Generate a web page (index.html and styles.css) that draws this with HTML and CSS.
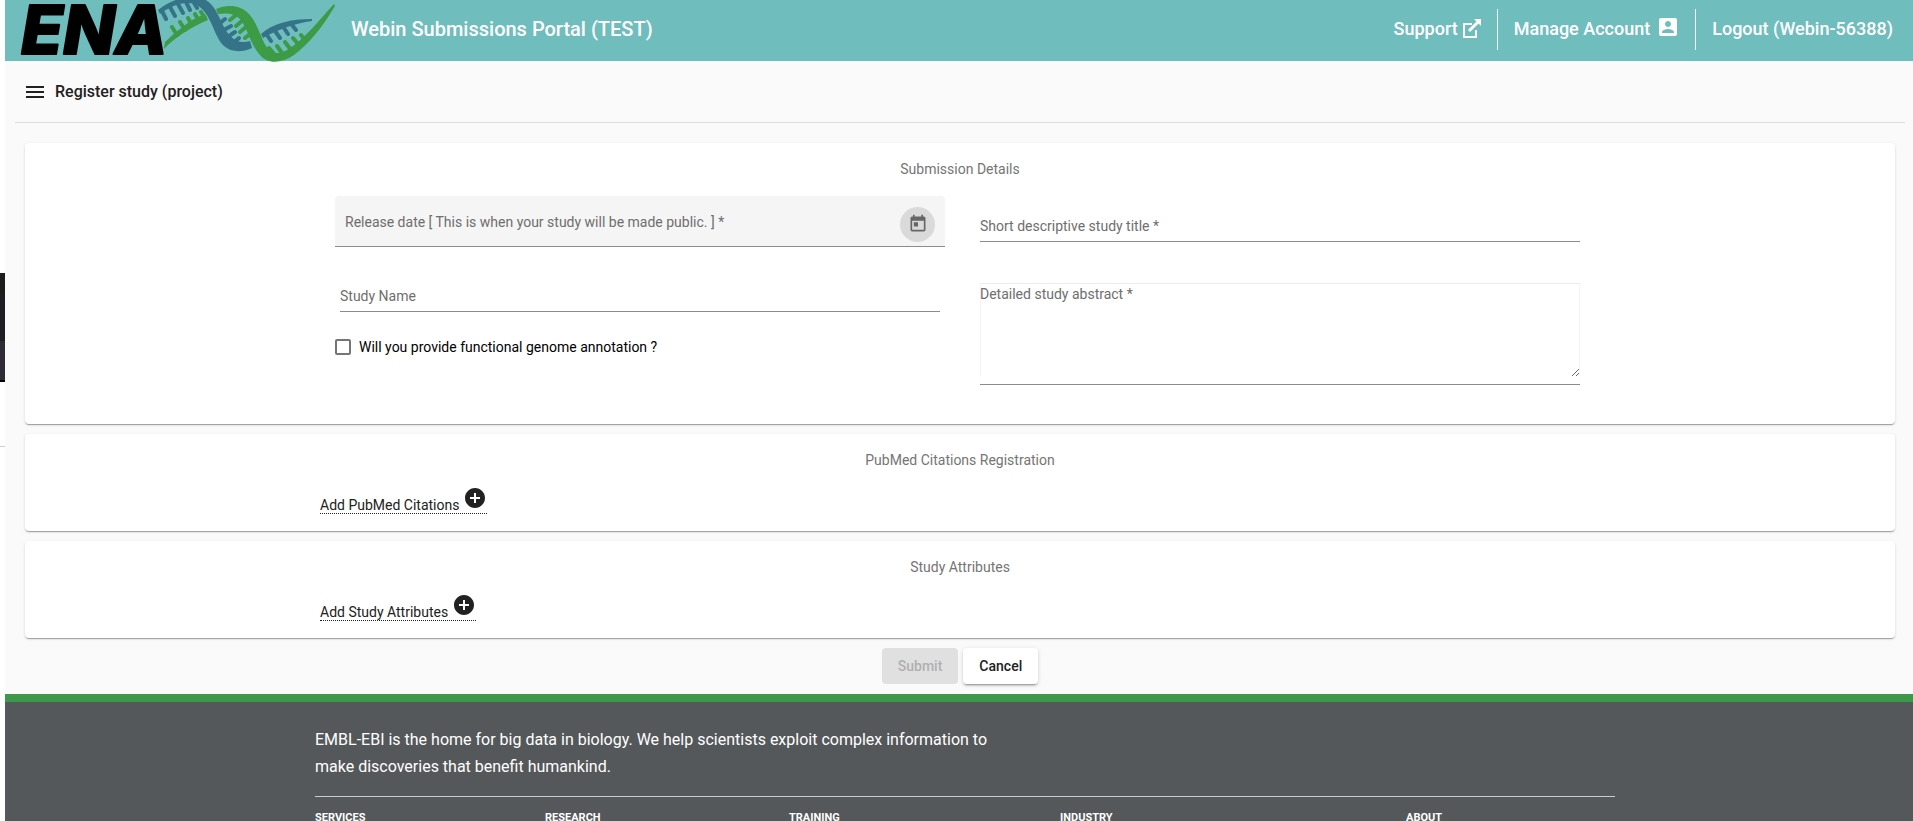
FILE: index.html
```html
<!DOCTYPE html>
<html lang="en">
<head>
<meta charset="utf-8">
<title>Webin Submissions Portal (TEST)</title>
<link rel="stylesheet" href="styles.css">
</head>
<body>
<div class="window-edge"><div class="edge-dark"></div><div class="edge-line"></div></div>
<div class="app">
  <header class="topbar">
    <a class="logo" href="#" aria-label="ENA home">
      <svg class="logo-art" width="332" height="62" viewBox="0 0 332 62">
        <text class="logo-text" x="16" y="54">ENA</text>
        <g fill="#3d9a45" stroke="none">
          <path d="M159 49C170 37 188 26 203 20L200 14C184 20 172 31 160 42z"/>
          <path d="M211 9C222 4 236 5 244 14C253 24 256 40 263 49C268 54 275 54 282 50C300 39 314 20 329 4L330 6C318 26 305 43 289 55C276 64 262 64 255 55C246 46 243 29 235 19C229 13 221 13 213 14z"/>
        </g>
        <g fill="#357488">
          <path d="M153 10C164 1 178 -4 191 -3C206 -2 212 12 217 23C223 37 232 45 245 41L247 48C236 53 226 52 219 46C208 36 207 12 190 4C178 1 166 6 155 14z"/>
          <path d="M256 34C268 23 286 19 307 19V21C290 23 272 30 258 38z"/>
        </g>
        <g fill="none" stroke-width="4" stroke-linecap="round">
          <path stroke="#3d9a45" d="M167 27l5 8M175 22l5 8M183 18l4 7M190 14l4 7M196 12l4 6M225 20l6-5M231 26l7-6M235 32l6-5M240 38l5-4M264 48l6 7M272 46l5 7M280 42l6 8M288 38l5 6M296 35l4 5"/>
          <path stroke="#357488" d="M157 11l4 8M165 7l5 9M173 4l5 9M181 2l4 8M188 1l4 7M214 24l6-5M217 31l9-5M221 38l9-6M227 44l7-6M262 35l4 6M270 31l5 7M279 28l4 6M287 25l4 5"/>
        </g>
      </svg>
    </a>
    <h1 class="portal-title">Webin Submissions Portal (TEST)</h1>
    <nav class="topnav">
      <a class="navlink" href="#">Support
        <svg width="18" height="19" viewBox="0 0 18 19" fill="none" stroke="#fff" stroke-width="2"><path d="M9 5H1v13h12v-7"/><path d="M6 12L15 3" stroke-width="3"/><path d="M11 0h7v7z" fill="#fff" stroke="none"/></svg>
      </a>
      <a class="navlink" href="#">Manage Account
        <svg class="account" width="18" height="18" viewBox="3 3 18 18" fill="#fff"><path d="M3 5v14c0 1.100.89 2 2 2h14c1.100 0 2-.9 2-2V5c0-1.100-.9-2-2-2H5c-1.110 0-2 .9-2 2zm12 4c0 1.660-1.340 3-3 3s-3-1.340-3-3 1.340-3 3-3 3 1.340 3 3zm-9 8c0-2 4-3.100 6-3.100s6 1.100 6 3.100v1H6v-1z"/></svg>
      </a>
      <a class="navlink" href="#">Logout (Webin-56388)</a>
    </nav>
  </header>
  <main class="content">
    <div class="pagebar">
      <button class="menu" type="button" aria-label="Menu"><svg width="18" height="12" viewBox="0 0 18 12" fill="#212121"><path d="M0 0h18v2H0zM0 5h18v2H0zM0 10h18v2H0z"/></svg></button>
      <h2 class="page-title">Register study (project)</h2>
    </div>
    <form class="form">
      <section class="card details">
        <h3 class="card-title">Submission Details</h3>
        <div class="fields">
          <div class="col">
            <div class="release">
              <input class="release-input" type="text" aria-label="Release date" placeholder="Release date [ This is when your study will be made public. ] *">
              <button class="calendar" type="button" aria-label="Open calendar"><svg width="24" height="24" viewBox="0 0 24 24" fill="#666"><path d="M19 3h-1V1h-2v2H8V1H6v2H5c-1.110 0-1.990.9-1.990 2L3 19c0 1.100.89 2 2 2h14c1.100 0 2-.9 2-2V5c0-1.100-.9-2-2-2zm0 16H5V8h14v11zM7 10h5v5H7z"/></svg></button>
            </div>
            <input class="line-input name" type="text" aria-label="Study Name" placeholder="Study Name">
            <label class="check"><input class="box" type="checkbox">Will you provide functional genome annotation ?</label>
          </div>
          <div class="col">
            <input class="line-input title" type="text" aria-label="Short descriptive study title" placeholder="Short descriptive study title *">
            <div class="abstract"><textarea class="area" aria-label="Detailed study abstract" placeholder="Detailed study abstract *"></textarea></div>
          </div>
        </div>
      </section>
      <section class="card">
        <h3 class="card-title">PubMed Citations Registration</h3>
        <div class="addrow"><a class="add" href="#">Add PubMed Citations <svg width="24" height="24" viewBox="0 0 24 24" fill="#212121"><path d="M12 2C6.480 2 2 6.480 2 12s4.480 10 10 10 10-4.480 10-10S17.520 2 12 2zm5 11h-4v4h-2v-4H7v-2h4V7h2v4h4v2z"/></svg></a></div>
      </section>
      <section class="card">
        <h3 class="card-title">Study Attributes</h3>
        <div class="addrow"><a class="add" href="#">Add Study Attributes <svg width="24" height="24" viewBox="0 0 24 24" fill="#212121"><path d="M12 2C6.480 2 2 6.480 2 12s4.480 10 10 10 10-4.480 10-10S17.520 2 12 2zm5 11h-4v4h-2v-4H7v-2h4V7h2v4h4v2z"/></svg></a></div>
      </section>
      <div class="actions">
        <button class="btn submit" type="submit" disabled>Submit</button>
        <button class="btn cancel" type="button">Cancel</button>
      </div>
    </form>
  </main>
  <footer class="footer">
    <div class="footer-inner">
      <p class="mission">EMBL-EBI is the home for big data in biology. We help scientists exploit complex information to make discoveries that benefit humankind.</p>
      <div class="footer-nav">
        <a href="#">SERVICES</a><a href="#">RESEARCH</a><a href="#">TRAINING</a><a href="#">INDUSTRY</a><a href="#">ABOUT</a>
      </div>
    </div>
  </footer>
</div>
</body>
</html>
```
FILE: styles.css
```css
* { box-sizing: border-box; }
html { height: 100%; }
body {
  margin: 0;
  height: 100vh;
  overflow: hidden;
  display: flex;
  background: #fff;
  font-family: Roboto, "Liberation Sans", sans-serif;
  font-size: 14px;
  color: #212121;
}
h1, h2, h3, p { margin: 0; }
a { color: inherit; text-decoration: none; }
button, input, textarea { font: inherit; }

.window-edge { width: 5px; flex: none; padding-top: 273px; }
.edge-dark { height: 109px; background: linear-gradient(#1c1c1c 0 22px, #1f1d24 22px 68px, #2f2c38 68px 107px, #000 107px); }
.edge-line { margin-top: 64px; height: 1px; background: #ccc; }

.app { flex: 1; min-width: 0; display: flex; flex-direction: column; background: #fafafa; }

.topbar { height: 61px; flex: none; display: flex; align-items: center; background: #70bdbd; color: #fff; padding-right: 20px; }
.logo { width: 332px; height: 61px; flex: none; margin-right: 14px; }
.logo-art { display: block; overflow: visible; }
.logo-text { font: italic 800 68px Inter, sans-serif; fill: #000; stroke: #000; stroke-width: 2px; stroke-linejoin: round; }
.portal-title { font-size: 20px; font-weight: 500; line-height: 24px; padding-bottom: 4px; }
.topnav { margin-left: auto; display: flex; font-size: 18px; font-weight: 500; }
.navlink { height: 41px; display: flex; align-items: center; gap: 5px; padding: 0 16px 2px; border-left: 1px solid #fff; margin-bottom: 2px; }
.navlink:first-child { border-left: 0; }
.navlink:last-child { padding-right: 0; }
.account { margin: 0 2px 4px 4px; }

.content { padding: 0 8px 0 10px; }
.pagebar { height: 62px; display: flex; align-items: center; gap: 11px; padding-left: 11px; border-bottom: 1px solid #dcdcdc; }
.menu { display: flex; border: 0; background: none; padding: 0; }
.page-title { font-size: 16px; font-weight: 500; }

.form { padding: 20px 10px 0; display: flex; flex-direction: column; gap: 10px; }
.card { background: #fff; border-radius: 4px; padding: 16px 16px 0; min-height: 97px; box-shadow: 0 2px 1px -1px rgba(0,0,0,.2), 0 1px 1px 0 rgba(0,0,0,.14), 0 1px 3px 0 rgba(0,0,0,.12); }
.card-title { text-align: center; font-size: 14px; line-height: 20px; font-weight: 400; color: #757575; }
.details { min-height: 281px; }
.fields { max-width: 1280px; margin: 17px auto 0; display: grid; grid-template-columns: 1fr 1fr; }
.col { padding: 0 20px; display: flex; flex-direction: column; }
.release { height: 51px; margin: 0 -5px; display: flex; align-items: center; padding: 0 10px; background: #f5f5f5; border-bottom: 1px solid #8c8c8c; border-radius: 4px 4px 0 0; }
.release-input { flex: 1; border: 0; background: none; padding: 1px 0 0; outline: 0; }
.calendar { width: 35px; height: 35px; margin-top: 6px; border: 0; border-radius: 50%; background: #dadada; display: grid; place-items: center; padding: 0; }
.calendar svg { width: 20px; height: 20px; }
.line-input { border: 0; border-bottom: 1px solid #8c8c8c; background: none; padding: 0 0 2px; height: 30px; outline: 0; }
::placeholder { color: #6e6e6e; opacity: 1; }
.name { margin-top: 35px; }
.title { margin-top: 16px; }
.check { margin: 25px 0 0 -5px; display: flex; align-items: center; gap: 8px; line-height: 20px; color: #000; }
.box { appearance: none; width: 16px; height: 16px; margin: 0; border: 2px solid #757575; border-radius: 2px; }
.abstract { margin-top: 41px; height: 102px; border-bottom: 1px solid #8c8c8c; }
.area { display: block; width: 100%; height: 94px; border: 0; box-shadow: inset 0 1px #ececec, inset 1px 0 #f4f4f4, inset -1px 0 #f4f4f4; background: none; padding: 3px 0; resize: vertical; line-height: 16px; outline: 0; }

.addrow { max-width: 1280px; margin: 16px auto 0; }
.add { display: inline-flex; align-items: flex-end; gap: 4px; border-bottom: 1px dotted #212121; line-height: 16px; height: 28px; }
.add svg { margin-bottom: 3px; }

.actions { display: flex; justify-content: center; gap: 5px; padding-bottom: 10px; }
.btn { height: 36px; padding: 0 16px; border: 0; border-radius: 4px; font-weight: 500; }
.submit { background: #e0e0e0; color: #b0b0b0; }
.cancel { background: #fff; color: #212121; box-shadow: 0 3px 1px -2px rgba(0,0,0,.2), 0 2px 2px 0 rgba(0,0,0,.14), 0 1px 5px 0 rgba(0,0,0,.12); }

.footer { flex: 1; border-top: 8px solid #3d984a; background: #54585a; color: #fff; padding-left: 12px; }
.footer-inner { max-width: 1300px; margin: 0 auto; padding-top: 24px; }
.mission { max-width: 700px; font-size: 16px; line-height: 27px; padding-bottom: 16px; }
.footer-nav { border-top: 1px solid #ccc; padding-top: 13px; display: grid; grid-template-columns: 230fr 244fr 271fr 346fr 209fr; font-size: 11px; line-height: 16px; font-weight: 700; }
```
